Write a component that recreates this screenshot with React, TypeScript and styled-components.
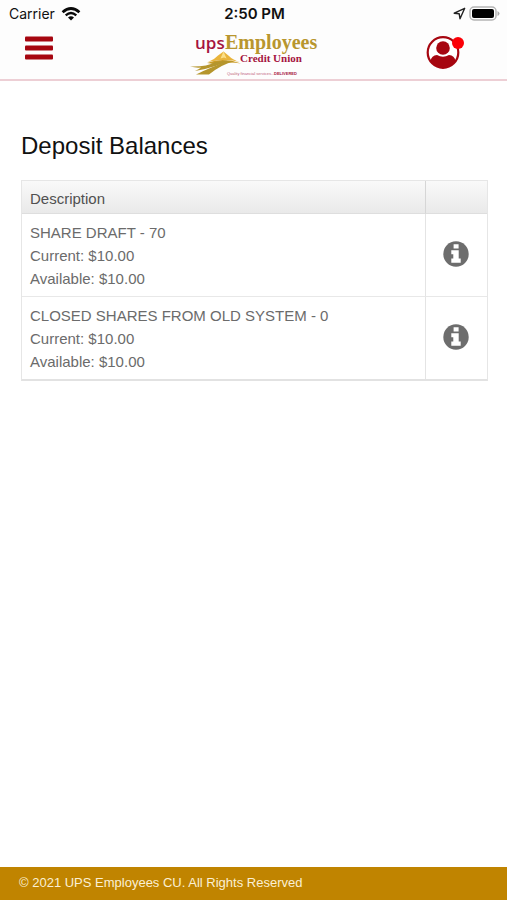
import React from "react";
import styled, { createGlobalStyle } from "styled-components";

const Global = createGlobalStyle`
  *, *::before, *::after { box-sizing: border-box; }
  body {
    margin: 0;
    background: #fff;
    color: #6b6b6b;
    font-family: "Liberation Sans", Arial, Helvetica, sans-serif;
    font-size: 15px;
  }
`;

const Page = styled.div`
  min-height: 100vh;
  display: flex;
  flex-direction: column;
`;

const StatusBar = styled.div`
  display: grid;
  grid-template-columns: 1fr auto 1fr;
  align-items: center;
  height: 27px;
  padding: 0 7px 0 9px;
  background: #fdfdfd;
  color: #111;
  font-family: Inter, "Liberation Sans", sans-serif;
  font-size: 14px;
`;

const StatusGroup = styled.div<{ $end?: boolean }>`
  display: flex;
  align-items: center;
  justify-content: ${(p) => (p.$end ? "flex-end" : "flex-start")};
  gap: ${(p) => (p.$end ? "3px" : "6px")};
`;

const Clock = styled.time`
  font-weight: 600;
  font-size: 15px;
`;

const TopBar = styled.header`
  display: grid;
  grid-template-columns: 1fr auto 1fr;
  align-items: center;
  height: 54px;
  padding: 0 25px;
  background: #fdfdfd;
  border-bottom: 2px solid #edcfd5;
`;

const IconButton = styled.button`
  display: flex;
  padding: 0;
  border: 0;
  background: none;
  cursor: pointer;
`;

const MenuButton = styled(IconButton)`
  justify-self: start;
  padding-bottom: 10px;
`;

const ProfileButton = styled(IconButton)`
  justify-self: end;
  margin-right: 17px;
  padding-bottom: 2px;
`;

const Brand = styled.a`
  display: block;
  height: 48px;
`;

const Content = styled.main`
  flex: 1;
  padding: 48px 19px 24px 21px;
`;

const Title = styled.h1`
  margin: 0 0 18px;
  color: #111;
  font-size: 24px;
  font-weight: 400;
  line-height: 33px;
`;

const Balances = styled.table`
  width: 100%;
  border-collapse: separate;
  border-spacing: 0;
  border: 1px solid #e6e6e6;
  border-bottom: 2px solid #e2e2e2;
`;

const HeadCell = styled.th<{ $narrow?: boolean }>`
  width: ${(p) => (p.$narrow ? "62px" : "auto")};
  height: 33px;
  padding: 2px 8px 0;
  border-bottom: 1px solid #dedede;
  border-left: ${(p) => (p.$narrow ? "1px solid #d6d6d6" : "0")};
  background: linear-gradient(#f9f9f9, #e9e9e9);
  color: #505050;
  font-weight: 400;
  text-align: left;
`;

const Row = styled.tr`
  & + & > td { border-top: 1px solid #e8e8e8; }
`;

const Cell = styled.td`
  padding: 7px 8px 6px;
  line-height: 23px;
`;

const ActionCell = styled.td`
  padding: 0 2px 2px 0;
  border-left: 1px solid #e4e4e4;
`;

const InfoButton = styled(IconButton)`
  margin: 0 auto;
`;

const Footer = styled.footer`
  padding: 0 19px 2px;
  background: #c08400;
  color: #fbf0d4;
  font-size: 13px;
  line-height: 31px;
`;

const WifiIcon = () => (
  <svg width="20" height="14" viewBox="0 0 20 14" fill="none" stroke="#0a0a0a" aria-hidden="true">
    <path d="M1.6 5.2Q10-2.2 18.4 5.2" strokeWidth="2.8" />
    <path d="M4.7 8.4Q10 3.8 15.3 8.4" strokeWidth="2.4" />
    <path d="M10 13.6L7 10.5Q10 8.2 13 10.5Z" fill="#0a0a0a" stroke="none" />
  </svg>
);

const LocationIcon = () => (
  <svg width="13" height="13" viewBox="0 0 13 13" fill="none" stroke="#222" strokeWidth="1.4" strokeLinejoin="round" aria-hidden="true">
    <path d="M11.7 1.3L1.2 6.2L6.2 6.8L7 11.7Z" />
  </svg>
);

const BatteryIcon = () => (
  <svg width="31" height="15" viewBox="0 0 31 15" aria-hidden="true">
    <rect x="1" y="1" width="26" height="13" rx="4" fill="#fff" stroke="#b4b4b4" strokeWidth="1.5" />
    <rect x="3" y="3" width="22" height="9" rx="2" fill="#000" />
    <path d="M28.5 5Q30.5 6 30.5 7.5Q30.5 9 28.5 10Z" fill="#aaa" />
  </svg>
);

const MenuIcon = () => (
  <svg width="28" height="24" viewBox="0 0 28 24" fill="#a60610" aria-hidden="true">
    <rect width="28" height="5" rx="1" y="0.5" />
    <rect width="28" height="5" rx="1" y="9.5" />
    <rect width="28" height="5" rx="1" y="18.5" />
  </svg>
);

const Logo = () => (
  <svg width="130" height="48" viewBox="0 0 130 48" role="img" aria-label="upsEmployees Credit Union">
    <path d="M19 33Q25 31 29 26.500L34.500 22.500L40 27Q44 31 51 33Q36 29 19 33Z" fill="#e9b43b" />
    <path d="M34.500 22.500L31.500 29.500L35 28.500L37.500 29.500Z" fill="#fbe089" />
    <path d="M18 34Q34 28 52 34.500Q44 33 38 33.500Q30 36 18 34Z" fill="#c99b25" />
    <path d="M1 37.500Q18 38 26 33L38 31.500Q29 38 6 42Q10 40 12 38.500Q7 39 1 37.500Z" fill="#b5952c" />
    <path d="M7 45.500Q15 41.500 20 39.500Q30 35.500 37 32L45 32.500Q33 35 20 45.500Z" fill="#b5952c" />
    <text x="6" y="20" fontFamily="'Open Sans', sans-serif" fontWeight="600" fontSize="17" fill="#a51440">ups</text>
    <text x="36" y="20" fontFamily="'Liberation Serif', serif" fontWeight="700" fontSize="20" fill="#b8962e">Employees</text>
    <text x="51" y="33" fontFamily="'Liberation Serif', serif" fontWeight="700" fontSize="11" fill="#a51440">Credit Union</text>
    <text x="38" y="46" fontFamily="'Liberation Sans', sans-serif" fontSize="4" fill="#c0607c">Quality financial services...</text>
    <text x="85" y="46" fontFamily="'Liberation Sans', sans-serif" fontWeight="700" fontSize="4" fill="#a51440">DELIVERED</text>
  </svg>
);

const ProfileIcon = () => (
  <svg width="39" height="34" viewBox="0 0 39 34" aria-hidden="true">
    <circle cx="17" cy="17.500" r="15.300" fill="#fff" stroke="#a60610" strokeWidth="2.200" />
    <circle cx="17" cy="13" r="6.800" fill="#a60610" />
    <path d="M4.500 26Q5.500 20.500 11 20Q17 23.500 23 20Q28.500 20.500 29.500 26Q24 33 17 33Q10 33 4.500 26Z" fill="#a60610" />
    <circle cx="32" cy="8" r="6" fill="#fb0007" />
  </svg>
);

const InfoIcon = () => (
  <svg width="26" height="26" viewBox="0 0 26 26" aria-hidden="true">
    <circle cx="13" cy="13" r="12.700" fill="#6d6d6d" />
    <path d="M10.600 3.200H15.600V7.400H10.600ZM8.300 9.300H15.700V17.600H17.700V21.700H8.300V17.600H10.300V13.200H8.300Z" fill="#fff" />
  </svg>
);

const accounts = [
  { name: "SHARE DRAFT - 70", current: "$10.00", available: "$10.00" },
  { name: "CLOSED SHARES FROM OLD SYSTEM - 0", current: "$10.00", available: "$10.00" },
];

export default function App() {
  return (
    <Page>
      <Global />
      <StatusBar>
        <StatusGroup>
          <span>Carrier</span>
          <WifiIcon />
        </StatusGroup>
        <Clock>2:50 PM</Clock>
        <StatusGroup $end>
          <LocationIcon />
          <BatteryIcon />
        </StatusGroup>
      </StatusBar>
      <TopBar>
        <MenuButton type="button" aria-label="Menu">
          <MenuIcon />
        </MenuButton>
        <Brand href="#">
          <Logo />
        </Brand>
        <ProfileButton type="button" aria-label="Profile">
          <ProfileIcon />
        </ProfileButton>
      </TopBar>
      <Content>
        <Title>Deposit Balances</Title>
        <Balances>
          <thead>
            <tr>
              <HeadCell scope="col">Description</HeadCell>
              <HeadCell $narrow scope="col" aria-label="Details" />
            </tr>
          </thead>
          <tbody>
            {accounts.map((a) => (
              <Row key={a.name}>
                <Cell>
                  <div>{a.name}</div>
                  <div>Current: {a.current}</div>
                  <div>Available: {a.available}</div>
                </Cell>
                <ActionCell>
                  <InfoButton type="button" aria-label={`Details for ${a.name}`}>
                    <InfoIcon />
                  </InfoButton>
                </ActionCell>
              </Row>
            ))}
          </tbody>
        </Balances>
      </Content>
      <Footer>© 2021 UPS Employees CU. All Rights Reserved</Footer>
    </Page>
  );
}
